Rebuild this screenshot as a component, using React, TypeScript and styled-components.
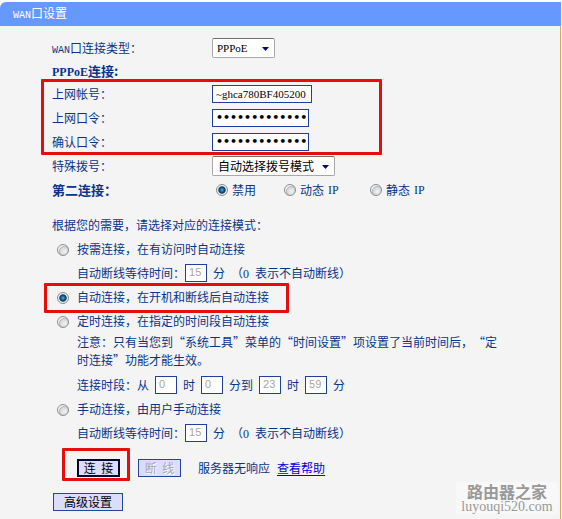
import React, { useState } from 'react';
import styled, { createGlobalStyle, css } from 'styled-components';

const NAVY = '#0a3488';
const RED = '#e60d0d';
const CJK = '"Noto Sans CJK SC", sans-serif';
const SERIF = '"Liberation Serif", "Noto Sans CJK SC", serif';

const GlobalStyle = createGlobalStyle`
  *, *::before, *::after { box-sizing: border-box; }
  body {
    margin: 0;
    background: #fffdf8;
    color: ${NAVY};
    font: 12px/24px ${CJK};
    text-spacing-trim: space-all;
  }
  input, select, button { font: inherit; margin: 0; }
`;

const Page = styled.div`
  position: relative;
  display: flex;
  flex-direction: column;
  min-height: 100vh;
  padding-top: 2px;
`;

const TitleBar = styled.header`
  height: 24px;
  margin-right: 1px;
  padding-left: 13px;
  background: #6699ff;
  border-top-left-radius: 6px;
  color: #fff;
`;

const Title = styled.h1`
  margin: 0;
  font-size: 12px;
  font-weight: 400;
  line-height: 22px;
`;

const Panel = styled.form`
  flex: 1;
  display: flex;
  flex-direction: column;
  margin-right: 1px;
  padding: 10px 40px 4px 52px;
  background: #f4f4f4;
  border-right: 1px solid #e2a45e;
`;

const Latin = styled.span`
  font-family: ${SERIF};
  font-size: 12px;
  line-height: 1;
`;

const Mono = styled.span`
  font-family: "Liberation Mono", monospace;
  font-size: 10px;
  line-height: 1;
`;

const FieldRow = styled.div`
  display: grid;
  grid-template-columns: 160px 1fr;
  align-items: center;
  height: 24px;
`;

const Heading = styled.h2`
  margin: 0;
  font-size: 13px;
  font-weight: 700;
  line-height: 22px;
`;

const FieldLabel = styled.label`
  line-height: 24px;
`;

const Marked = styled.div<{ $inset: string }>`
  position: relative;
  display: flex;
  flex-direction: column;
  width: fit-content;
  &::after {
    content: '';
    position: absolute;
    inset: ${(p) => p.$inset};
    border: 3px solid ${RED};
    border-radius: 1px;
    pointer-events: none;
  }
`;

const TextInput = styled.input<{ $width: number; $secret?: boolean }>`
  width: ${(p) => p.$width}px;
  height: 18px;
  padding: 0 0 0 3px;
  border: 1px solid #20409a;
  border-radius: 0;
  background: #fff;
  color: #000;
  font-family: ${SERIF};
  font-size: 11px;
  outline: none;
  ${(p) =>
    p.$secret &&
    css`
      font-family: "DejaVu Sans", sans-serif;
      font-weight: 700;
    `}
`;

const NumberInput = styled.input`
  width: 22px;
  height: 18px;
  padding: 0 0 2px 3px;
  border: 1px solid #20409a;
  border-radius: 0;
  background: #fff;
  color: #a9a4a0;
  font-family: "Liberation Sans", sans-serif;
  font-size: 11px;
  outline: none;
`;

const SelectWrap = styled.span<{ $width: number }>`
  position: relative;
  display: block;
  width: ${(p) => p.$width}px;
  height: 20px;
`;

const SelectBox = styled.select<{ $latin?: boolean }>`
  appearance: none;
  display: block;
  width: 100%;
  height: 20px;
  padding: 0 14px 0 5px;
  border: 1px solid #a8a8a8;
  border-top-color: #707070;
  border-radius: 2px;
  background: #fff;
  color: #000;
  line-height: 16px;
  outline: none;
  ${(p) =>
    p.$latin &&
    css`
      padding-left: 4px;
      font-family: ${SERIF};
      font-size: 11px;
    `}
`;

const SelectArrow = styled.svg`
  position: absolute;
  right: 6px;
  top: 9px;
  pointer-events: none;
`;

const Radio = styled.input`
  appearance: none;
  flex: none;
  width: 12px;
  height: 12px;
  border: 1px solid #8a8d90;
  border-radius: 50%;
  background: radial-gradient(circle at 65% 65%, #f4f4f4 0, #d4d6d8 45%, #b4b8bb 56%, #f4f4f4 64%);
  &:checked {
    background: radial-gradient(circle at 50% 50%, #49b4dc 0, #17608f 28%, #0f2f55 46%, #e8eef2 58%);
  }
`;

const InlineRadios = styled.div`
  display: flex;
  padding-left: 4px;
`;

const InlineRadio = styled.label<{ $width: number }>`
  display: flex;
  align-items: center;
  gap: 4px;
  width: ${(p) => p.$width}px;
  white-space: nowrap;
`;

const Modes = styled.section`
  margin-top: 11px;
`;

const Intro = styled.p`
  margin: 0;
  line-height: 24px;
`;

const ModeLabel = styled.label`
  display: flex;
  align-items: center;
  gap: 8px;
  height: 24px;
  padding: 2px 0 0 5px;
  line-height: 20px;
`;

const ModeText = styled.span`
  padding-bottom: 2px;
`;

const Detail = styled.div`
  display: flex;
  align-items: center;
  gap: 6px;
  height: 24px;
  padding-left: 25px;
  white-space: nowrap;
`;

const WaitField = styled.span`
  display: flex;
  align-items: center;
`;

const Note = styled.p`
  max-width: 446px;
  margin: 0 0 4px;
  padding-left: 25px;
  line-height: 18px;
`;

const Actions = styled.div`
  display: flex;
  align-items: center;
  height: 24px;
  margin: 11px 0 0 25px;
`;

const Button = styled.button<{ $width: number; $primary?: boolean }>`
  width: ${(p) => p.$width}px;
  height: 18px;
  padding: 0;
  border: ${(p) => (p.$primary ? '2px solid #05072c' : '1px solid #24459c')};
  border-radius: 0;
  background: #dcdcff;
  color: #000;
  line-height: 14px;
  white-space: pre;
  &:disabled {
    color: #a4a4b0;
    text-shadow: 1px 1px 0 #fff;
  }
`;

const Disconnect = styled.div`
  display: flex;
  margin-left: 18px;
`;

const Status = styled.span`
  margin: 0 7px 0 17px;
`;

const HelpLink = styled.a`
  color: #0000e0;
  text-decoration: underline;
  text-underline-offset: 2px;
`;

const Footer = styled.div`
  display: flex;
  align-items: center;
  height: 24px;
  margin: 10px 0 0 1px;
`;

const Watermark = styled.aside`
  position: absolute;
  right: 4px;
  bottom: 5px;
  width: 102px;
  background: #f8f8f8;
  color: #999;
  text-align: center;
`;

const SiteName = styled.div`
  font-size: 16px;
  font-weight: 700;
  line-height: 18px;
`;

const SiteUrl = styled.div`
  font-family: ${SERIF};
  font-size: 14px;
  line-height: 14px;
`;

function Dropdown({ id, width, options, latin }: { id: string; width: number; options: string[]; latin?: boolean }) {
  return (
    <SelectWrap $width={width}>
      <SelectBox id={id} $latin={latin}>
        {options.map((o) => (
          <option key={o}>{o}</option>
        ))}
      </SelectBox>
      <SelectArrow width="7" height="4" viewBox="0 0 7 4" aria-hidden="true">
        <path d="M0 0H7L3.5 4Z" fill="#08086c" />
      </SelectArrow>
    </SelectWrap>
  );
}

function WaitTime({ id }: { id: string }) {
  return (
    <Detail>
      <WaitField>
        <label htmlFor={id}>自动断线等待时间：</label>
        <NumberInput id={id} defaultValue="15" disabled />
      </WaitField>
      <span>分</span>
      <span>
        （<Latin>0</Latin>
      </span>
      <span>表示不自动断线）</span>
    </Detail>
  );
}

function Mode({ value, current, onPick, children }: { value: string; current: string; onPick: (v: string) => void; children: React.ReactNode }) {
  return (
    <ModeLabel>
      <Radio type="radio" name="mode" value={value} checked={current === value} onChange={() => onPick(value)} />
      <ModeText>{children}</ModeText>
    </ModeLabel>
  );
}

export default function App() {
  const [mode, setMode] = useState('auto');
  return (
    <>
      <GlobalStyle />
      <Page lang="zh-CN">
        <TitleBar>
          <Title>
            <Mono>WAN</Mono>口设置
          </Title>
        </TitleBar>
        <Panel onSubmit={(e) => e.preventDefault()}>
          <FieldRow>
            <FieldLabel htmlFor="type">
              <Mono>WAN</Mono>口连接类型：
            </FieldLabel>
            <Dropdown id="type" width={63} options={['PPPoE']} latin />
          </FieldRow>
          <Heading>
            <Latin>PPPoE</Latin>连接:
          </Heading>
          <Marked $inset="-3px -70px -1px -11px">
            <FieldRow>
              <FieldLabel htmlFor="account">上网帐号：</FieldLabel>
              <TextInput id="account" $width={100} defaultValue="~ghca780BF405200" />
            </FieldRow>
            <FieldRow>
              <FieldLabel htmlFor="password">上网口令：</FieldLabel>
              <TextInput id="password" type="password" $secret $width={97} defaultValue="1234567890123" />
            </FieldRow>
            <FieldRow>
              <FieldLabel htmlFor="confirm">确认口令：</FieldLabel>
              <TextInput id="confirm" type="password" $secret $width={97} defaultValue="1234567890123" />
            </FieldRow>
          </Marked>
          <FieldRow>
            <FieldLabel htmlFor="dial">特殊拨号：</FieldLabel>
            <Dropdown id="dial" width={123} options={['自动选择拨号模式']} />
          </FieldRow>
          <FieldRow role="radiogroup" aria-labelledby="second">
            <Heading id="second">第二连接：</Heading>
            <InlineRadios>
              <InlineRadio $width={68}>
                <Radio type="radio" name="second" defaultChecked />
                禁用
              </InlineRadio>
              <InlineRadio $width={86}>
                <Radio type="radio" name="second" />
                动态 <Latin>IP</Latin>
              </InlineRadio>
              <InlineRadio $width={86}>
                <Radio type="radio" name="second" />
                静态 <Latin>IP</Latin>
              </InlineRadio>
            </InlineRadios>
          </FieldRow>

          <Modes>
            <Intro>根据您的需要，请选择对应的连接模式：</Intro>
            <Mode value="demand" current={mode} onPick={setMode}>
              按需连接，在有访问时自动连接
            </Mode>
            <WaitTime id="wait-demand" />
            <Marked $inset="-2px -20px -4px -8px">
              <Mode value="auto" current={mode} onPick={setMode}>
                自动连接，在开机和断线后自动连接
              </Mode>
            </Marked>
            <Mode value="timed" current={mode} onPick={setMode}>
              定时连接，在指定的时间段自动连接
            </Mode>
            <Note>注意：只有当您到“系统工具”菜单的“时间设置”项设置了当前时间后，“定时连接”功能才能生效。</Note>
            <Detail>
              <span>连接时段：从</span>
              <NumberInput aria-label="开始时" defaultValue="0" disabled />
              <span>时</span>
              <NumberInput aria-label="开始分" defaultValue="0" disabled />
              <span>分到</span>
              <NumberInput aria-label="结束时" defaultValue="23" disabled />
              <span>时</span>
              <NumberInput aria-label="结束分" defaultValue="59" disabled />
              <span>分</span>
            </Detail>
            <Mode value="manual" current={mode} onPick={setMode}>
              手动连接，由用户手动连接
            </Mode>
            <WaitTime id="wait-manual" />
          </Modes>

          <Actions>
            <Marked $inset="-11px -10px -4px -15px">
              <Button type="submit" $width={43} $primary>
                {'连  接'}
              </Button>
            </Marked>
            <Disconnect>
              <Button type="button" $width={43} disabled>
                {'断  线'}
              </Button>
            </Disconnect>
            <Status>服务器无响应</Status>
            <HelpLink href="#help">查看帮助</HelpLink>
          </Actions>
          <Footer>
            <Button type="button" $width={70}>
              高级设置
            </Button>
          </Footer>
        </Panel>
        <Watermark>
          <SiteName>路由器之家</SiteName>
          <SiteUrl>luyouqi520.com</SiteUrl>
        </Watermark>
      </Page>
    </>
  );
}
